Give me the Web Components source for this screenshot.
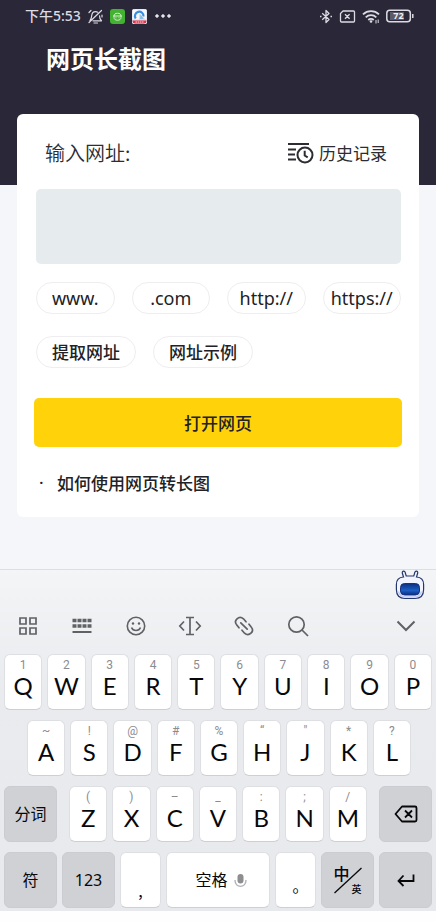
<!DOCTYPE html>
<html lang="zh-CN">
<head>
<meta charset="utf-8">
<meta name="viewport" content="width=device-width, initial-scale=1">
<title>网页长截图</title>
<style>
  html { background: #fefefe; }
  body { margin: 0; font-family: Lato, "Noto Sans CJK SC", sans-serif; color: #222226; }
</style>
</head>
<body>
<capture-app></capture-app>

<template id="t-app">
  <style>
    :host { display: block; }
    main { display: block; background: #f5f6fa; padding-bottom: 52px; }
    header { background: #2a2838; padding-bottom: 109px; }
    h1 { margin: 0; padding: 10px 46px 0; font-size: 24px; line-height: 34px; font-weight: 700; color: #fff; }
    url-card { margin: -71px 17px 0; }
  </style>
  <main>
    <header>
      <status-bar></status-bar>
      <h1>网页长截图</h1>
    </header>
    <url-card></url-card>
  </main>
  <soft-keyboard></soft-keyboard>
</template>

<template id="t-status">
  <style>
    :host { display: flex; align-items: center; justify-content: space-between; height: 32px; padding: 0 22px 0 25px; color: #dcdbe3; }
    div { display: flex; align-items: center; }
    .left { gap: 7px; }
    .right { gap: 6px; }
    time { font-size: 14px; line-height: 20px; font-weight: 500; font-family: "Noto Sans", "Noto Sans CJK SC", sans-serif; }
    svg { display: block; fill: none; stroke: currentColor; }
    .battery { position: relative; }
    .battery span { position: absolute; left: 0; top: 0; width: 25px; text-align: center; font: 700 9px/14px "Open Sans", sans-serif; color: #f2f2f6; }
  </style>
  <div class="left">
    <time>下午5:53</time>
    <svg width="15" height="15" viewBox="0 0 15 15" stroke-width="1.2" stroke-linecap="round" stroke-linejoin="round"><path d="M5 11.800h8.500c-1.600-1.200-2-2.500-2-5M2 11.500c1.500-1.500 1.500-3 1.700-5C4 4 5.300 2.600 7.500 2.600c.8 0 1.600.2 2.200.6M6 14h3.500M1 13.500 13.500 1.500M3 1.500 1 3.500M14 8V6"/></svg>
    <svg width="15" height="15" viewBox="0 0 15 15"><rect width="15" height="15" rx="3" fill="#43b231" stroke="none"/><path d="M3 7h9M4 7c0-2 1.500-2.700 3.500-2.700S11 5 11 7v1.500c0 2-1.500 2.700-3.500 2.700S4 10.500 4 8.500zM6 8.300v1M9 8.300v1" stroke="#d3f0cc"/></svg>
    <svg width="15" height="15" viewBox="0 0 15 15" stroke="none"><rect width="15" height="15" rx="3" fill="#f5f8fc"/><path d="M0 11h15v1a3 3 0 0 1-3 3H3a3 3 0 0 1-3-3z" fill="#e0334a"/><path d="M3.700 9.500A4.300 4.300 0 1 1 11.500 7.500" stroke="#3a8de0" stroke-width="2.200" fill="none"/><path d="M7.500 5.500c2 0 2.700 2 5 4.800H7c1-1.500 1-3 .5-4.800z" fill="#74bdf0"/><path d="M3.500 13h8" stroke="#ffd9de" stroke-dasharray="1.500 .7"/></svg>
    <svg width="18" height="4" viewBox="0 0 18 4" fill="currentColor" stroke="none"><g fill="#f0f0f4"><circle cx="3" cy="2" r="1.300"/><circle cx="9" cy="2" r="1.300"/><circle cx="15" cy="2" r="1.300"/></g></svg>
  </div>
  <div class="right">
    <svg width="14" height="15" viewBox="0 0 14 15" stroke-width="1.300" stroke-linejoin="round"><path d="M3.200 4.300 10 10.500 7 13.500v-12l3 3-6.800 6.200"/><path d="M1 7.500h1.500M11.500 7.500H13" stroke-width="1.600"/></svg>
    <svg width="17" height="13" viewBox="1 0 17 13" stroke-width="1.300" stroke-linejoin="round"><path d="M5 1h10.500a1 1 0 0 1 1 1v9a1 1 0 0 1-1 1h-12a1 1 0 0 1-1-1V3.500zM7 4.200l4.600 4.600M11.600 4.200 7 8.800"/></svg>
    <svg width="18" height="15" viewBox="0 0 18 15" stroke-width="1.800"><path d="M1 5.300C5.500 1 12.500 1 17 5.300M3.700 8.300c3-2.800 7.600-2.800 10.600 0M6.300 11c1.500-1.400 3.900-1.400 5.400 0"/><circle cx="9" cy="12.500" r="1.300" fill="currentColor" stroke="none"/><path d="M14 11v3.500M16.200 10.500V14" stroke-width="1"/></svg>
    <div class="battery">
      <svg width="28" height="14" viewBox="0 0 28 14"><rect x="4" y="3" width="14" height="8" fill="#5b5a68" stroke="none"/><rect x=".8" y="1.300" width="23.500" height="11.400" rx="3" stroke-width="1.500"/><path d="M26.800 5v4" stroke-width="1.500"/></svg>
      <span>72</span>
    </div>
  </div>
</template>

<template id="t-card">
  <style>
    :host { display: block; background: #fff; border-radius: 6px; padding: 20px 17px 22px; }
    .top { display: flex; justify-content: space-between; align-items: center; height: 38px; padding: 0 15px 0 11px; }
    label { font-size: 20px; line-height: 28px; font-weight: 350; color: #2c2c32; font-family: "Noto Sans CJK SC", sans-serif; }
    .history { display: flex; align-items: center; gap: 5px; border: 0; padding: 0; background: none; color: #2c2c32; font: 400 17px/24px "Noto Sans CJK SC", sans-serif; }
    .history svg { display: block; fill: none; stroke: currentColor; stroke-width: 2; }
    textarea { display: block; box-sizing: border-box; width: calc(100% - 3px); height: 75px; margin: 17px 1px 0 2px; padding: 12px; border: 0; border-radius: 5px; background: #e6ecee; resize: none; font: 400 17px/24px "Noto Sans CJK SC", sans-serif; outline: 0; }
    .chips { display: grid; grid-template-columns: repeat(4, 1fr); gap: 17px; padding: 18px 1px 0 2px; }
    .words { display: flex; gap: 17px; padding: 22px 1px 0 2px; }
    .open { display: block; width: 100%; height: 49px; margin-top: 30px; border: 0; padding: 0; border-radius: 5px; background: #ffd20a; color: #222226; font: 500 17px/24px "Noto Sans CJK SC", sans-serif; }
    ul { list-style: none; margin: 24px 0 0; padding: 0 0 0 5px; font: 500 17px/24px "Noto Sans CJK SC", sans-serif; }
    li { display: flex; gap: 14px; }
    li::before { content: "·"; width: 4px; font-family: "Noto Sans", sans-serif; }
    a { color: inherit; text-decoration: none; }
  </style>
  <div class="top">
    <label for="url">输入网址:</label>
    <button class="history"><svg width="27" height="22" viewBox="0 0 27 22"><path d="M1 2h21M1 7.500h8M1 12.500h7M1 17.500h8"/><circle cx="18" cy="13" r="7.500"/><path d="M17.700 8.800v4.700l3 1.800"/></svg>历史记录</button>
  </div>
  <textarea id="url"></textarea>
  <div class="chips">
    <chip-button>www.</chip-button><chip-button>.com</chip-button><chip-button>http://</chip-button><chip-button>https://</chip-button>
  </div>
  <div class="words">
    <chip-button class="w">提取网址</chip-button><chip-button class="w">网址示例</chip-button>
  </div>
  <button class="open">打开网页</button>
  <ul><li><a href="#help">如何使用网页转长图</a></li></ul>
</template>

<template id="t-chip">
  <style>
    :host { display: block; }
    button { display: block; box-sizing: border-box; width: 100%; height: 32px; border: 1px solid #eeeef0; border-radius: 16px; background: #fff; padding: 0; color: #222226; font: 400 18px/24px "Noto Sans", sans-serif; white-space: nowrap; }
    :host(.w) button { padding: 0 15px; font: 500 17px/24px "Noto Sans CJK SC", sans-serif; }
  </style>
  <button><slot></slot></button>
</template>

<template id="t-key">
  <style>
    :host { display: block; min-width: 0; }
    button { display: flex; flex-direction: column; align-items: center; box-sizing: border-box; width: 100%; height: 56px; margin: 0; border: 1px solid #dddfe3; border-bottom-color: #cdcfd3; border-radius: 6px; background: #fff; padding: 3px 0 0; color: #08080a; font: 400 24px/28px Lato, sans-serif; }
    small { height: 14px; font: 400 12px/14px Roboto, sans-serif; color: #8c8c90; }
    :host([kind]) button { justify-content: center; padding: 0; font: 400 16px/24px "Noto Sans", "Noto Sans CJK SC", sans-serif; }
    :host([kind]) small { display: none; }
    :host([kind="side"]) button { background: #d0d1d5; border-color: #cbccd1; }
    :host([kind="mark"]) button { justify-content: flex-end; padding-bottom: 5px; font-family: "Noto Sans CJK TC", sans-serif; }
    :host([kind="space"]) button { flex-direction: row; align-items: center; gap: 6px; padding-left: 6px; }
  </style>
  <button><small></small><slot></slot></button>
</template>

<template id="t-board">
  <style>
    :host { display: block; border-top: 1px solid #dcdee3; background: linear-gradient(#f4f5f7, #eaebee 35%, #e8e9ed); padding-bottom: 3px; }
    svg { display: block; fill: none; stroke: currentColor; }
    .mascot { display: flex; justify-content: flex-end; padding-right: 11px; height: 31px; }
    .tools { display: grid; grid-template-columns: repeat(6, 54px) 1fr; align-items: center; height: 49px; padding: 0 16px 4px 1px; color: #606165; }
    .tools button { display: grid; place-items: center; border: 0; padding: 0; background: none; color: inherit; height: 40px; }
    .tools button:last-child { justify-self: end; width: 28px; }
    .rows { display: grid; gap: 10px; }
    .row { display: grid; gap: 5px; padding: 0 4px; }
    .r1 { grid-template-columns: repeat(10, 1fr); }
    .r2 { grid-template-columns: repeat(9, 1fr); padding: 0 25px 0 27px; }
    .r3 { grid-template-columns: 53px 1fr 53px; gap: 12px; }
    .inner { display: grid; grid-template-columns: repeat(7, 1fr); gap: 5px; }
    .r4 { grid-template-columns: 53px 53px 41px 1fr 41px 53px 53px; }
    .lang { display: grid; grid-template-columns: 16px 12px; grid-template-rows: 16px 14px; width: 28px; }
    .lang svg { grid-area: 1 / 1 / 3 / 3; }
    .lang b { grid-area: 1 / 1; font: 500 16px/16px "Noto Sans CJK SC", sans-serif; }
    .lang i { grid-area: 2 / 2; align-self: end; justify-self: end; font: 500 10px/12px "Noto Sans CJK SC", sans-serif; }
  </style>
  <div class="mascot">
    <svg width="30" height="30" viewBox="0 0 30 30"><defs><linearGradient id="face" x1="0" y1="0" x2="0" y2="1"><stop offset="0" stop-color="#0d2f80"/><stop offset=".6" stop-color="#1d5ec5"/><stop offset="1" stop-color="#0b2c7c"/></linearGradient></defs><path d="M8.500 7 7.300 3C7 .8 9.800.6 10.200 2.500L11.200 6h7.600l1-3.500C20.200.6 23 .8 22.700 3L21.500 7C26 7.300 28.600 10 28.600 14.500v5c0 6-3 9-8.600 9H10c-5.600 0-8.600-3-8.600-9v-5C1.400 10 4 7.300 8.500 7z" fill="#f2f4ff" stroke="#24376f" stroke-width="1.200"/><path d="M3.500 21.500c1 4 3.500 5.500 7 5.500h9c3.500 0 6-1.500 7-5.500" stroke="#c4cbf0" stroke-width="1.300"/><rect x="5.500" y="13.500" width="19" height="11.500" rx="4" fill="url(#face)" stroke="#153481"/></svg>
  </div>
  <div class="tools">
    <button aria-label="菜单"><svg width="20" height="20" viewBox="0 0 20 20" stroke-width="1.700"><path d="M2 2h6v6H2zM12 2h6v6h-6zM2 12h6v6H2zM12 12h6v6h-6z"/></svg></button>
    <button aria-label="键盘"><svg width="20" height="16" viewBox="0 0 20 16"><path d="M.5 2.500h19M.5 8h19" stroke-width="3.500" stroke-dasharray="4 1"/><path d="M.5 14h19" stroke-width="2"/></svg></button>
    <button aria-label="表情"><svg width="20" height="20" viewBox="0 0 20 20" stroke-width="1.600"><circle cx="10" cy="10" r="8.700"/><path d="M5.500 11.500c1.500 4 7.500 4 9 0"/><circle cx="7" cy="7.500" r="1.200" fill="currentColor" stroke="none"/><circle cx="13" cy="7.500" r="1.200" fill="currentColor" stroke="none"/></svg></button>
    <button aria-label="光标"><svg width="24" height="20" viewBox="0 0 24 20" stroke-width="1.700"><path d="M12 1.500v17M8 1.500h8M8 18.500h8M6 5.500 1.800 10 6 14.500M18 5.500l4.200 4.500-4.200 4.500"/></svg></button>
    <button aria-label="链接"><svg width="20" height="20" viewBox="0 0 20 20" stroke-width="1.700" stroke-linecap="round"><path d="M5 11.800 2.800 9C-1 4.500 5-1 9.500 2.800L12 5.800M6.800 6.800l6.400 6.400M8 14.200l2.500 3C15 21 21 15.500 17.200 11L15 8.200"/></svg></button>
    <button aria-label="搜索"><svg width="22" height="22" viewBox="0 0 22 22" stroke-width="1.700"><circle cx="9.500" cy="9.500" r="7.700"/><path d="m15 15 6 6"/></svg></button>
    <button aria-label="收起"><svg width="20" height="12" viewBox="0 0 20 12" stroke-width="2"><path d="m1.500 1.500 8.500 8.500 8.500-8.500"/></svg></button>
  </div>
  <div class="rows">
    <div class="row r1"></div>
    <div class="row r2"></div>
    <div class="row r3"><key-cap kind="side">分词</key-cap><div class="inner"></div>
      <key-cap kind="side"><svg aria-label="删除" width="24" height="18" viewBox="0 0 24 18" stroke-width="1.800" stroke-linejoin="round"><path d="M8 1.500h13a1.500 1.500 0 0 1 1.500 1.500v12a1.500 1.500 0 0 1-1.500 1.500H8L1.500 9zM11 5.500l7 7M18 5.500l-7 7"/></svg></key-cap></div>
    <div class="row r4">
      <key-cap kind="side">符</key-cap><key-cap kind="side">123</key-cap><key-cap kind="mark">,</key-cap>
      <key-cap kind="space">空格<svg width="13" height="15" viewBox="0 0 13 15"><rect x="3.500" y="1" width="6" height="9.500" rx="3" fill="#8e8e91" stroke="none"/><path d="M1 7c0 8.500 11 8.500 11 0" stroke="#b1b2b5" stroke-width="1.400"/></svg></key-cap>
      <key-cap kind="mark">。</key-cap>
      <key-cap kind="side"><span class="lang"><svg width="28" height="30" viewBox="0 0 28 30" stroke-width="1.300"><path d="M.5 28 27.500 3"/></svg><b>中</b><i>英</i></span></key-cap>
      <key-cap kind="side"><svg aria-label="换行" width="18" height="14" viewBox="0 0 18 14" stroke-width="1.800"><path d="M16.500 1.500V8h-15M6.500 2.500 1.500 8l5 5"/></svg></key-cap>
    </div>
  </div>
</template>

<script>
  const mount = (host, id) => {
    const root = host.attachShadow({ mode: "open" });
    root.append(document.getElementById(id).content.cloneNode(true));
    return root;
  };

  customElements.define("key-cap", class extends HTMLElement {
    constructor() { super(); this.root = mount(this, "t-key"); }
    connectedCallback() { this.root.querySelector("small").textContent = this.getAttribute("hint") || ""; }
  });
  customElements.define("chip-button", class extends HTMLElement {
    constructor() { super(); mount(this, "t-chip"); }
  });
  customElements.define("status-bar", class extends HTMLElement {
    constructor() { super(); mount(this, "t-status"); }
  });
  customElements.define("url-card", class extends HTMLElement {
    constructor() { super(); mount(this, "t-card"); }
  });
  customElements.define("soft-keyboard", class extends HTMLElement {
    constructor() {
      super();
      const root = mount(this, "t-board");
      const fill = (selector, letters, hints) => {
        [...letters].forEach((letter, i) => {
          const key = document.createElement("key-cap");
          key.setAttribute("hint", hints[i]);
          key.textContent = letter;
          root.querySelector(selector).append(key);
        });
      };
      fill(".r1", "QWERTYUIOP", "1234567890");
      fill(".r2", "ASDFGHJKL", "~!@#%“\"*?");
      fill(".inner", "ZXCVBNM", "()–_:;/");
    }
  });
  customElements.define("capture-app", class extends HTMLElement {
    constructor() { super(); mount(this, "t-app"); }
  });
</script>
</body>
</html>
